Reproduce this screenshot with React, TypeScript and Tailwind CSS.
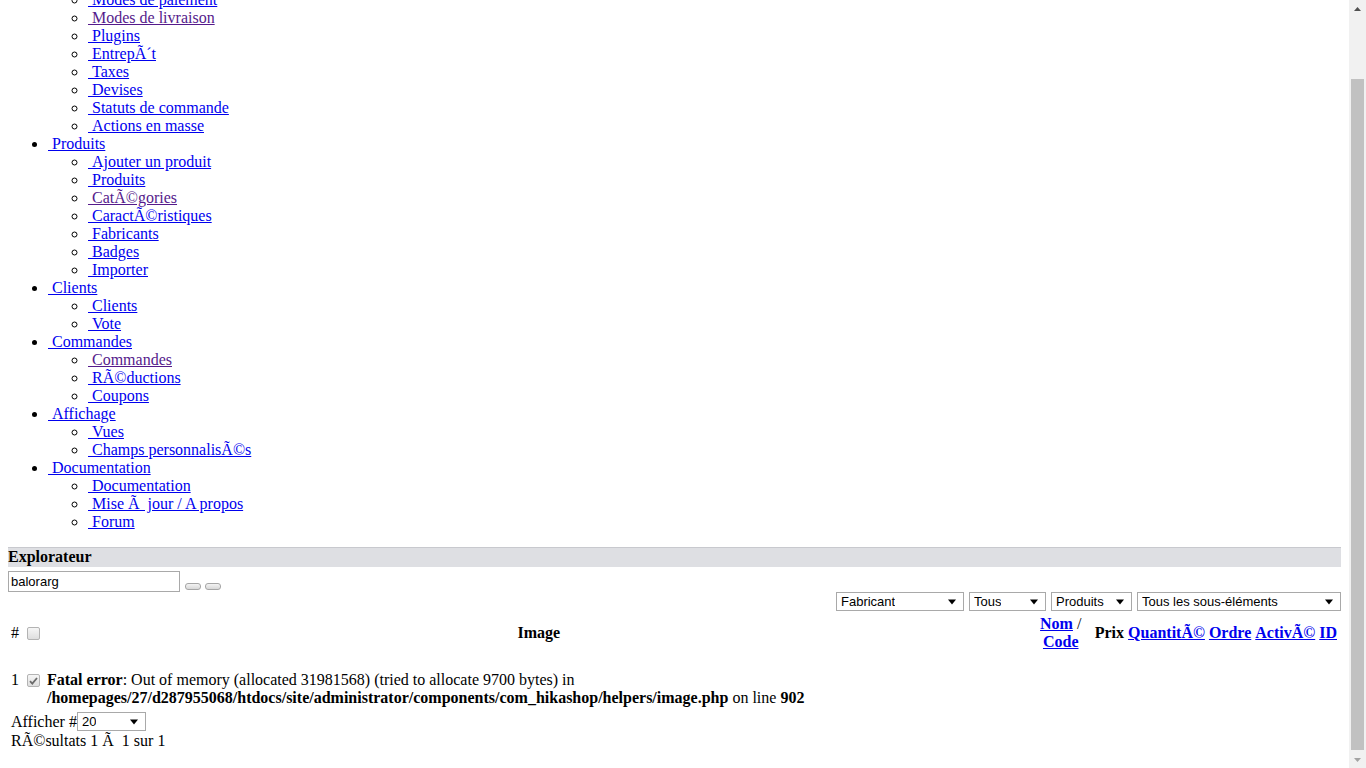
import React from 'react';

type MenuItem = { label: string; visited?: boolean };
type MenuGroup = { label: string; items: MenuItem[] };

const menu: MenuGroup[] = [
  {
    label: 'SystÃ¨me',
    items: [
      { label: 'Configuration' },
      { label: 'Modes de paiement' },
      { label: 'Modes de livraison', visited: true },
      { label: 'Plugins' },
      { label: 'EntrepÃ´t' },
      { label: 'Taxes' },
      { label: 'Devises' },
      { label: 'Statuts de commande' },
      { label: 'Actions en masse' },
    ],
  },
  {
    label: 'Produits',
    items: [
      { label: 'Ajouter un produit' },
      { label: 'Produits' },
      { label: 'CatÃ©gories', visited: true },
      { label: 'CaractÃ©ristiques' },
      { label: 'Fabricants' },
      { label: 'Badges' },
      { label: 'Importer' },
    ],
  },
  { label: 'Clients', items: [{ label: 'Clients' }, { label: 'Vote' }] },
  {
    label: 'Commandes',
    items: [{ label: 'Commandes', visited: true }, { label: 'RÃ©ductions' }, { label: 'Coupons' }],
  },
  { label: 'Affichage', items: [{ label: 'Vues' }, { label: 'Champs personnalisÃ©s' }] },
  {
    label: 'Documentation',
    items: [
      { label: 'Documentation' },
      { label: 'Mise Ã\u00a0 jour / A propos' },
      { label: 'Forum' },
    ],
  },
];

function MenuLink({ label, visited }: MenuItem) {
  return (
    <a
      href="#"
      className={`underline ${visited ? 'text-[#551a8b]' : 'text-[#0000ee]'}`}
    >
      {'\u00a0'}
      {label}
    </a>
  );
}

function Arrow() {
  return (
    <svg width="8" height="6" viewBox="0 0 8 6" className="shrink-0">
      <path d="M0 0.5h8L4 5.5z" fill="#000" />
    </svg>
  );
}

function FakeSelect({ value, width }: { value: string; width: string }) {
  return (
    <div
      className={`flex h-[19px] items-center justify-between border border-[#a9a9a9] bg-white pl-[4px] pr-[7px] ${width}`}
    >
      <span className="truncate leading-none">{value}</span>
      <Arrow />
    </div>
  );
}

function Box({ checked = false }: { checked?: boolean }) {
  return (
    <span className="inline-flex h-[13px] w-[13px] items-center justify-center rounded-[2px] border border-[#b3b3b3] bg-linear-to-b from-[#f6f6f6] to-[#dedede]">
      {checked && (
        <svg width="9" height="8" viewBox="0 0 9 8">
          <path d="M1 4.2l2.3 2.4L8 1" fill="none" stroke="#6b6b6b" strokeWidth="1.8" />
        </svg>
      )}
    </span>
  );
}

function SmallButton() {
  return (
    <span className="block h-[7px] w-[16px] rounded-[3px] border border-[#a6a6a6] bg-linear-to-b from-[#f3f3f3] to-[#d8d8d8]" />
  );
}

function Scrollbar() {
  return (
    <div className="flex h-full w-[17px] shrink-0 flex-col bg-[#f1f1f1]">
      <div className="flex h-[17px] items-center justify-center">
        <svg width="7" height="4" viewBox="0 0 7 4">
          <path d="M0 4h7L3.5 0z" fill="#505050" />
        </svg>
      </div>
      <div className="flex-1 px-[2px] pt-[62px] pb-[1px]">
        <div className="h-full bg-[#c1c1c1]" />
      </div>
      <div className="flex h-[17px] items-center justify-center">
        <svg width="7" height="4" viewBox="0 0 7 4">
          <path d="M0 0h7L3.5 4z" fill="#a3a3a3" />
        </svg>
      </div>
    </div>
  );
}

export default function App() {
  const sans = "font-['Liberation_Sans',Arial,sans-serif] text-[13px]";

  return (
    <div className="flex h-[768px] w-full overflow-hidden bg-white font-['Liberation_Serif','Times_New_Roman',serif] text-[16px] leading-[18px] text-black">
      <div className="min-w-0 flex-1 overflow-hidden">
        <div className="-mt-[45px] px-2">
          {/* admin menu, rendered without its stylesheet */}
          <ul className="mb-4 list-disc pl-10">
            {menu.map((group) => (
              <li key={group.label}>
                <MenuLink label={group.label} />
                <ul className="list-[circle] pl-10">
                  {group.items.map((item) => (
                    <li key={item.label}>
                      <MenuLink {...item} />
                    </li>
                  ))}
                </ul>
              </li>
            ))}
          </ul>

          <div className="h-[20px] border-t border-[#c8c9ce] bg-[#dedfe3] text-[16px] leading-[18px] font-bold">
            Explorateur
          </div>

          <div className="mt-[4px] flex items-end gap-[4px]">
            <div
              className={`flex h-[21px] w-[172px] items-center border border-[#a9a9a9] bg-white px-[2px] ${sans}`}
            >
              balorarg
            </div>
            <div className="mb-[2px] ml-[1px] flex gap-[4px]">
              <SmallButton />
              <SmallButton />
            </div>
          </div>

          <div className={`flex justify-end gap-[5px] ${sans}`}>
            <FakeSelect value="Fabricant" width="w-[128px]" />
            <FakeSelect value="Tous" width="w-[77px]" />
            <FakeSelect value="Produits" width="w-[81px]" />
            <FakeSelect value="Tous les sous-éléments" width="w-[204px]" />
          </div>

          {/* list header */}
          <div className="mt-[3px] flex h-[38px] items-center">
            <div className="w-[16px] pl-[3px]">#</div>
            <div className="flex w-[19px] pl-[3px]">
              <Box />
            </div>
            <div className="flex-1 text-center font-bold">Image</div>
            <div className="mr-[8px] w-[52px] text-center">
              <a href="#" className="font-bold text-[#0000ee] underline">
                Nom
              </a>{' '}
              /<br />
              <a href="#" className="font-bold text-[#0000ee] underline">
                Code
              </a>
            </div>
            <div className="flex gap-[4px] pr-[4px] font-bold">
              <span>Prix</span>
              <a href="#" className="text-[#0000ee] underline">
                QuantitÃ©
              </a>
              <a href="#" className="text-[#0000ee] underline">
                Ordre
              </a>
              <a href="#" className="text-[#0000ee] underline">
                ActivÃ©
              </a>
              <a href="#" className="text-[#0000ee] underline">
                ID
              </a>
            </div>
          </div>

          {/* the single row */}
          <div className="mt-[19px] flex items-start">
            <div className="w-[16px] pl-[3px]">1</div>
            <div className="flex w-[19px] pt-[3px] pl-[3px]">
              <Box checked />
            </div>
            <div className="pl-[4px]">
              <b>Fatal error</b>: Out of memory (allocated 31981568) (tried to allocate 9700 bytes) in
              <br />
              <b>/homepages/27/d287955068/htdocs/site/administrator/components/com_hikashop/helpers/image.php</b>{' '}
              on line <b>902</b>
            </div>
          </div>

          {/* pagination */}
          <div className="mt-[5px] pl-[3px]">
            <div className="flex h-[19px] items-center">
              <span>Afficher #</span>
              <div className={sans}>
                <FakeSelect value="20" width="w-[69px]" />
              </div>
            </div>
            <div className="leading-[19px]">RÃ©sultats 1 Ã{'\u00a0'} 1 sur 1</div>
          </div>
        </div>
      </div>
      <Scrollbar />
    </div>
  );
}
